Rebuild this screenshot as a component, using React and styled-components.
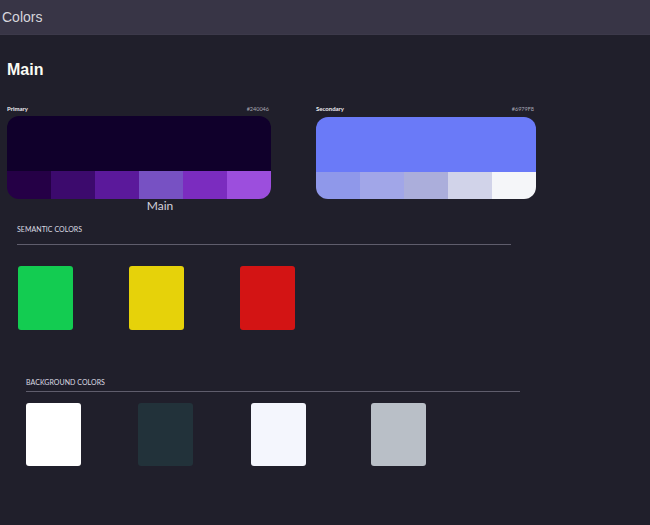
import React from "react";
import styled, { createGlobalStyle } from "styled-components";

const Global = createGlobalStyle`
  html, body { margin: 0; padding: 0; background: #201f2b; }
  body { font-family: "Liberation Sans", Arial, sans-serif; }
  #root { min-height: 525px; background: #201f2b; }
`;

const Page = styled.div`
  width: 650px;
  min-height: 525px;
  background: #201f2b;
  overflow: hidden;
`;

const TopBar = styled.header`
  height: 35px;
  box-sizing: border-box;
  background: #383546;
  border-bottom: 1px solid #3c394a;
  display: flex;
  align-items: center;
  padding-left: 2px;
`;

const TopTitle = styled.h1`
  margin: 0;
  font-family: "Liberation Sans", Arial, sans-serif;
  font-weight: 400;
  font-size: 14px;
  color: #d6d5dd;
  line-height: 16px;
`;

const Content = styled.main`
  padding: 25px 0 0 7px;
`;

const Heading = styled.h2`
  margin: 0 0 25px 0;
  font-family: "Liberation Sans", Arial, sans-serif;
  font-weight: 700;
  font-size: 16px;
  line-height: 20px;
  color: #fbfbf4;
`;

const PaletteRow = styled.div`
  display: flex;
  gap: 45px;
  align-items: flex-start;
`;

const PaletteColumn = styled.div`
  width: ${(p) => p.$width}px;
  display: flex;
  flex-direction: column;
`;

const LabelRow = styled.div`
  display: flex;
  justify-content: space-between;
  align-items: baseline;
  font-family: Lato, "Noto Sans", sans-serif;
  line-height: 8px;
  margin-bottom: ${(p) => p.$gap}px;
`;

const PaletteName = styled.span`
  font-size: 6px;
  font-weight: 700;
  color: #ecebf0;
`;

const PaletteHex = styled.span`
  font-size: 5.5px;
  color: #a9a8b4;
  padding-right: 2px;
`;

const Card = styled.div`
  height: ${(p) => p.$h}px;
  border-radius: 12px;
  overflow: hidden;
  display: flex;
  flex-direction: column;
`;

const CardMain = styled.div`
  height: 55px;
  background: ${(p) => p.$color};
`;

const ShadeRow = styled.div`
  flex: 1;
  display: flex;
`;

const Shade = styled.div`
  flex: 1;
  background: ${(p) => p.$color};
`;

const Caption = styled.div`
  font-family: Lato, "Noto Sans", sans-serif;
  font-size: 12px;
  line-height: 14px;
  color: #d2d1da;
  text-align: center;
  padding-left: 42px;
`;

const Section = styled.section`
  width: 494px;
  margin-left: ${(p) => p.$indent}px;
  margin-top: ${(p) => p.$top}px;
`;

const SectionTitle = styled.div`
  font-family: Lato, "Noto Sans", sans-serif;
  font-size: 7px;
  line-height: 9px;
  letter-spacing: 0.05px;
  text-transform: uppercase;
  color: #dcdbe3;
  padding-bottom: ${(p) => p.$gap}px;
  border-bottom: 1px solid #5f5d6c;
`;

const SwatchRow = styled.div`
  display: flex;
  padding-left: ${(p) => p.$pad || 0}px;
  margin-top: ${(p) => p.$top}px;
`;

const Swatch = styled.div`
  width: 55px;
  height: ${(p) => p.$h}px;
  border-radius: 3px;
  background: ${(p) => p.$color};
  margin-right: ${(p) => p.$space}px;
  flex-shrink: 0;
`;

const primaryShades = ["#250046", "#3c0a6d", "#5b199b", "#7751c3", "#7b2cbf", "#9c4edd"];
const secondaryShades = ["#8f98ea", "#a1a6e8", "#abaedb", "#d1d3e9", "#f5f6f9"];
const semantic = [
  { c: "#13cc51", s: 56 },
  { c: "#e6d20a", s: 56 },
  { c: "#d31414", s: 0 },
];
const backgrounds = [
  { c: "#ffffff", s: 57 },
  { c: "#22323a", s: 58 },
  { c: "#f4f6fd", s: 65 },
  { c: "#b9bfc7", s: 0 },
];

export default function App() {
  return (
    <Page>
      <Global />
      <TopBar>
        <TopTitle>Colors</TopTitle>
      </TopBar>
      <Content>
        <Heading>Main</Heading>
        <PaletteRow>
          <PaletteColumn $width={264}>
            <LabelRow $gap={3}>
              <PaletteName>Primary</PaletteName>
              <PaletteHex>#240046</PaletteHex>
            </LabelRow>
            <Card $h={83}>
              <CardMain $color="#10002b" />
              <ShadeRow>
                {primaryShades.map((c) => (
                  <Shade key={c} $color={c} />
                ))}
              </ShadeRow>
            </Card>
            <Caption>Main</Caption>
          </PaletteColumn>
          <PaletteColumn $width={220}>
            <LabelRow $gap={4}>
              <PaletteName>Secondary</PaletteName>
              <PaletteHex>#6979F8</PaletteHex>
            </LabelRow>
            <Card $h={82}>
              <CardMain $color="#6a7af8" />
              <ShadeRow>
                {secondaryShades.map((c) => (
                  <Shade key={c} $color={c} />
                ))}
              </ShadeRow>
            </Card>
          </PaletteColumn>
        </PaletteRow>

        <Section $indent={10} $top={12}>
          <SectionTitle $gap={10}>Semantic colors</SectionTitle>
          <SwatchRow $pad={1} $top={21}>
            {semantic.map((s) => (
              <Swatch key={s.c} $color={s.c} $space={s.s} $h={64} />
            ))}
          </SwatchRow>
        </Section>

        <Section $indent={19} $top={48}>
          <SectionTitle $gap={4}>Background colors</SectionTitle>
          <SwatchRow $top={11}>
            {backgrounds.map((s) => (
              <Swatch key={s.c} $color={s.c} $space={s.s} $h={63} />
            ))}
          </SwatchRow>
        </Section>
      </Content>
    </Page>
  );
}
